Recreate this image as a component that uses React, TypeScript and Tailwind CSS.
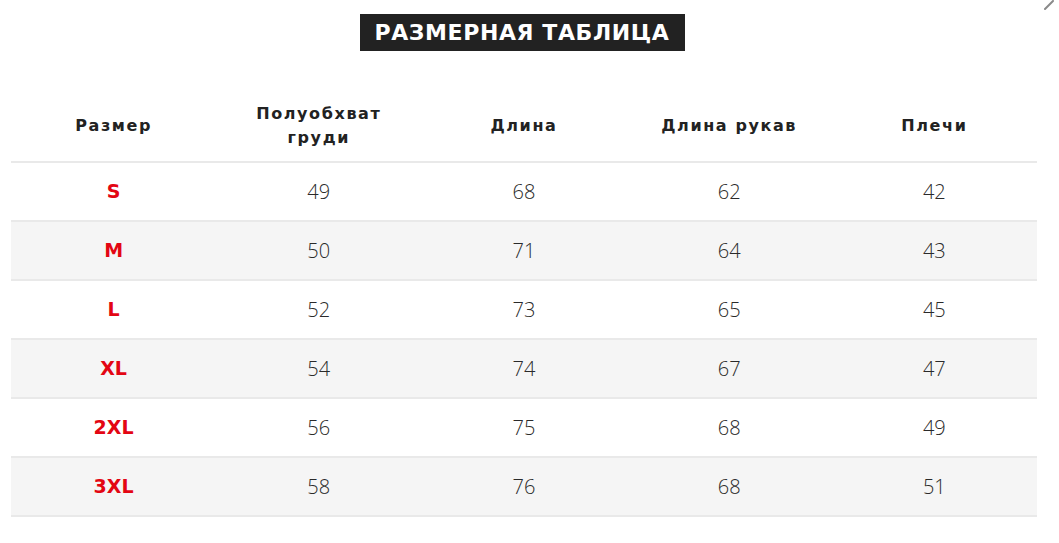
import React from "react"

const rows = [
  ["S", "49", "68", "62", "42"],
  ["M", "50", "71", "64", "43"],
  ["L", "52", "73", "65", "45"],
  ["XL", "54", "74", "67", "47"],
  ["2XL", "56", "75", "68", "49"],
  ["3XL", "58", "76", "68", "51"],
]

const headers = [["Размер"], ["Полуобхват", "груди"], ["Длина"], ["Длина рукав"], ["Плечи"]]

export default function App() {
  return (
    <div className="relative w-[1059px] h-[543px] bg-white overflow-hidden" style={{ fontFamily: '"DejaVu Sans", "Open Sans", sans-serif' }}>
      {/* edit pencil fragment in corner */}
      <svg className="absolute right-[4px] top-0" width="12" height="10" viewBox="0 0 12 10">
        <path d="M2 9 L10 1" stroke="#8a8a8a" strokeWidth="2" strokeLinecap="round" />
      </svg>

      <div className="flex justify-center w-[1044px] pt-[14px]">
        <h2 className="bg-[#222222] text-white font-bold text-[22px] leading-[37px] h-[37px] px-[15px] tracking-[0.6px]">
          РАЗМЕРНАЯ ТАБЛИЦА
        </h2>
      </div>

      <table className="mt-[39px] ml-[11px] w-[1026px] table-fixed border-collapse">
        <thead>
          <tr className="h-[72px] border-b-2 border-[#e9e9e9]">
            {headers.map((h, i) => (
              <th key={i} className="whitespace-nowrap text-center align-middle font-bold text-[16px] leading-[24px] tracking-[1.6px] text-[#222222]">
                {h.map((line, k) => (
                  <div key={k}>{line}</div>
                ))}
              </th>
            ))}
          </tr>
        </thead>
        <tbody>
          {rows.map((r, i) => (
            <tr key={i} className={`h-[59px] border-b-2 border-[#e9e9e9] ${i % 2 === 1 ? "bg-[#f5f5f5]" : "bg-white"}`}>
              {r.map((c, j) => (
                <td
                  key={j}
                  className={
                    j === 0
                      ? "text-center align-middle font-bold text-[19px] text-[#e30613]"
                      : "text-center align-middle text-[20px] text-[#2a2a2a]"
                  }
                  style={j === 0 ? undefined : { fontFamily: '"Open Sans", sans-serif', fontWeight: 300 }}
                >
                  {c}
                </td>
              ))}
            </tr>
          ))}
        </tbody>
      </table>
    </div>
  )
}
